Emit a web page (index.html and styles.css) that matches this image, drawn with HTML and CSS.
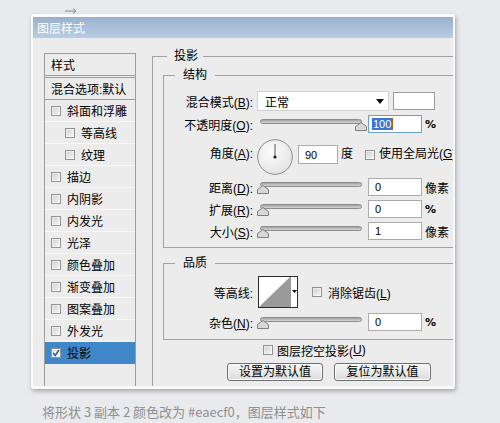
FILE: index.html
```html
<!DOCTYPE html>
<html lang="zh">
<head>
<meta charset="utf-8">
<title>图层样式</title>
<link rel="stylesheet" href="styles.css">
</head>
<body>
<div class="arrow-row">
  <svg width="12" height="6" viewBox="0 0 12 6"><path d="M0 3H11M8 0.5L11 3L8 5.5" stroke="#8a8a8a" fill="none"/></svg>
</div>
<div class="window">
  <div class="titlebar">图层样式</div>
  <div class="body">
    <ul class="list">
      <li class="hdr">样式</li>
      <li class="blend">混合选项:默认</li>
      <li><span class="cb"></span>斜面和浮雕</li>
      <li class="sub"><span class="cb"></span>等高线</li>
      <li class="sub"><span class="cb"></span>纹理</li>
      <li><span class="cb"></span>描边</li>
      <li><span class="cb"></span>内阴影</li>
      <li><span class="cb"></span>内发光</li>
      <li><span class="cb"></span>光泽</li>
      <li><span class="cb"></span>颜色叠加</li>
      <li><span class="cb"></span>渐变叠加</li>
      <li><span class="cb"></span>图案叠加</li>
      <li><span class="cb"></span>外发光</li>
      <li class="sel"><span class="cb checked"><svg width="8" height="8" viewBox="0 0 8 8"><path d="M1 4L3.2 6.5L7 1" stroke="#2d5fa8" stroke-width="1.6" fill="none"/></svg></span>投影</li>
    </ul>
    <fieldset class="grp outer">
      <legend>投影</legend>
      <fieldset class="grp inner">
        <legend>结构</legend>
        <div class="row r-blend">
          <span class="lbl">混合模式(<u>B</u>):</span>
          <div class="select"><span>正常</span><svg width="8" height="5" viewBox="0 0 8 5"><path d="M0 0H8L4 5Z" fill="#111"/></svg></div>
          <div class="swatch"></div>
        </div>
        <div class="row r-op">
          <span class="lbl">不透明度(<u>O</u>):</span>
          <div class="slider"><div class="track"></div><svg class="thumb right" width="12" height="9" viewBox="0 0 12 9"><path d="M0.5 8.5V4.5L6 0.5L11.5 4.5V8.5Z" fill="#d8d8d8" stroke="#7f7f7f"/></svg></div>
          <div class="inp focus"><span class="selected">100</span></div>
          <span class="unit pct">%</span>
        </div>
        <div class="row r-angle">
          <span class="lbl">角度(<u>A</u>):</span>
          <svg class="dial" width="36" height="36" viewBox="0 0 36 36"><defs><radialGradient id="dg" cx="40%" cy="35%" r="70%"><stop offset="0" stop-color="#fdfdfd"/><stop offset="1" stop-color="#e2e2e2"/></radialGradient></defs><circle cx="18" cy="18" r="17.3" fill="url(#dg)" stroke="#8c8c8c"/><line x1="18" y1="18" x2="18" y2="5" stroke="#555" stroke-width="1"/><circle cx="18" cy="18" r="1.6" fill="#222"/></svg>
          <div class="inp inp-angle">90</div>
          <span class="deg">度</span>
          <span class="cb cb-global"></span>
          <span class="global">使用全局光(<u>G</u>)</span>
        </div>
        <div class="row r-dist">
          <span class="lbl">距离(<u>D</u>):</span>
          <div class="slider"><div class="track"></div><svg class="thumb" width="12" height="9" viewBox="0 0 12 9"><path d="M0.5 8.5V4.5L6 0.5L11.5 4.5V8.5Z" fill="#d8d8d8" stroke="#7f7f7f"/></svg></div>
          <div class="inp">0</div>
          <span class="unit">像素</span>
        </div>
        <div class="row r-dist">
          <span class="lbl">扩展(<u>R</u>):</span>
          <div class="slider"><div class="track"></div><svg class="thumb" width="12" height="9" viewBox="0 0 12 9"><path d="M0.5 8.5V4.5L6 0.5L11.5 4.5V8.5Z" fill="#d8d8d8" stroke="#7f7f7f"/></svg></div>
          <div class="inp">0</div>
          <span class="unit pct">%</span>
        </div>
        <div class="row r-size">
          <span class="lbl">大小(<u>S</u>):</span>
          <div class="slider"><div class="track"></div><svg class="thumb" width="12" height="9" viewBox="0 0 12 9"><path d="M0.5 8.5V4.5L6 0.5L11.5 4.5V8.5Z" fill="#d8d8d8" stroke="#7f7f7f"/></svg></div>
          <div class="inp">1</div>
          <span class="unit">像素</span>
        </div>
      </fieldset>
      <fieldset class="grp inner quality">
        <legend>品质</legend>
        <div class="row r-contour">
          <span class="lbl">等高线:</span>
          <svg class="contour" width="40" height="32" viewBox="0 0 40 32"><rect x="0.5" y="0.5" width="39" height="31" fill="#fff" stroke="#2b2b2b"/><path d="M1 31L32 1V31Z" fill="#9a9a9a"/><line x1="32.5" y1="1" x2="32.5" y2="31" stroke="#9a9a9a"/><path d="M34 14H39L36.5 17Z" fill="#111"/></svg>
          <span class="cb cb-aa"></span>
          <span>消除锯齿(<u>L</u>)</span>
        </div>
        <div class="row r-size">
          <span class="lbl">杂色(<u>N</u>):</span>
          <div class="slider"><div class="track"></div><svg class="thumb" width="12" height="9" viewBox="0 0 12 9"><path d="M0.5 8.5V4.5L6 0.5L11.5 4.5V8.5Z" fill="#d8d8d8" stroke="#7f7f7f"/></svg></div>
          <div class="inp">0</div>
          <span class="unit pct">%</span>
        </div>
      </fieldset>
      <div class="knock"><span class="cb"></span>图层挖空投影(<u>U</u>)</div>
      <div class="btns">
        <div class="btn">设置为默认值</div>
        <div class="btn wide">复位为默认值</div>
      </div>
    </fieldset>
  </div>
</div>
<p class="caption">将形状 3 副本 2 颜色改为 #eaecf0，图层样式如下</p>
</body>
</html>
```

FILE: styles.css
```css
* { box-sizing: border-box; }
html, body { margin: 0; padding: 0; }
body {
  background: #e9eaee;
  font-family: "Liberation Sans", "Noto Sans CJK SC", sans-serif;
  font-size: 12px;
  color: #000;
  width: 500px;
  height: 423px;
  overflow: hidden;
}
u { text-decoration: underline; text-underline-offset: 1px; }

.arrow-row { height: 14px; display: flex; }
.arrow-row svg { margin: 8px 0 0 65px; }

.window {
  margin-left: 31px;
  width: 424px;
  height: 375px;
  background: #ececec;
  border: solid #fafafa;
  border-width: 3px 2px 3px 2px;
  border-radius: 2px;
  box-shadow: 1px 2px 4px rgba(0, 0, 0, 0.3);
  overflow: hidden;
}
.titlebar {
  height: 21px;
  line-height: 21px;
  padding-left: 4px;
  color: #fff;
  background: linear-gradient(#9ab0cb, #b9cde6);
  font-family: "Noto Sans CJK SC", sans-serif;
  font-size: 12px;
}
.body {
  display: flex;
  align-items: flex-start;
  gap: 16px;
  padding: 10px 0 0 11px;
}

/* left style list */
.list {
  flex: none;
  width: 92px;
  height: 400px;
  margin: 5px 0 0;
  padding: 0;
  list-style: none;
  border: 1px solid #9d9d9d;
}
.list li {
  height: 22px;
  display: flex;
  align-items: center;
  padding-left: 6px;
  border-bottom: 1px solid #f8f8f8;
  white-space: nowrap;
}
.list .hdr { border-bottom-color: #9d9d9d; margin-bottom: 1px; }
.list .blend { height: 23px; border-top: 1px solid #9d9d9d; border-bottom-color: #9d9d9d; }
.list .sub { padding-left: 20px; }
.list .sel { background: #3f87c9; border-bottom-color: #3f87c9; }

.cb {
  flex: none;
  width: 10px;
  height: 10px;
  margin-right: 6px;
  border: 1px solid #939393;
  background: linear-gradient(135deg, #cfcfcf, #f7f7f7);
  box-shadow: inset 0 0 0 1px rgba(255, 255, 255, 0.5);
  display: flex;
  align-items: center;
  justify-content: center;
}
.cb.checked { background: linear-gradient(135deg, #dcdcdc, #ffffff); }

/* group boxes */
.grp {
  margin: 0;
  min-width: 0;
  border: 1px solid #a3a3a3;
}
.grp legend {
  padding: 0 5px 0 7px;
  margin-left: 4px;
  line-height: 17px;
  font-size: 12px;
}
.outer {
  flex: none;
  width: 320px;
  height: 400px;
  padding: 2px 0 0 10px;
}
.inner {
  width: 100%;
  padding: 7px 0 7px 0;
}
.inner legend { margin-left: 11px; padding: 0 8px; }
.quality { margin-top: 7px; padding: 4px 0 8px 0; }

.row { display: flex; align-items: center; white-space: nowrap; }
.lbl { flex: none; width: 89px; margin-right: 4px; text-align: right; }
.r-blend { height: 20px; margin-bottom: 4px; }
.r-op { height: 18px; margin-bottom: 6px; }
.r-angle { height: 36px; align-items: flex-start; margin-bottom: 3px; }
.r-dist { height: 18px; margin-bottom: 4px; }
.r-size { height: 18px; }
.r-contour { height: 32px; margin-bottom: 5px; }

.select {
  flex: none;
  width: 132px;
  height: 20px;
  padding: 0 4px 0 7px;
  background: #fff;
  border: 1px solid #d2d2d2;
  display: flex;
  align-items: center;
  justify-content: space-between;
}
.swatch {
  flex: none;
  width: 42px;
  height: 18px;
  margin-left: 4px;
  background: #fff;
  border: 1px solid #9c9c9c;
}

.slider { position: relative; flex: none; width: 110px; height: 14px; margin-right: 1px; }
.track {
  height: 5px;
  margin: 2px 5px 0 3px;
  border-radius: 3px;
  border: 1px solid #8d8d8d;
  background: linear-gradient(#a3a3a3, #d6d6d6);
}
.thumb { position: absolute; top: 5px; left: 0; }
.thumb.right { left: auto; right: 0; }

.inp {
  flex: none;
  width: 54px;
  height: 18px;
  padding-left: 6px;
  background: #fff;
  border: 1px solid #ababab;
  font-family: "Liberation Sans", sans-serif;
  font-size: 11px;
  display: flex;
  align-items: center;
}
.inp.focus { border-color: #6d9fd6; padding-left: 3px; }
.selected {
  background: #3a78d4;
  color: #fff;
  line-height: 12px;
  padding: 0 1px;
  border-right: 1px solid #c2580a;
}
.unit { margin-left: 3px; }
.pct { font-family: "DejaVu Sans", sans-serif; font-size: 11px; font-weight: bold; }

.dial { flex: none; }
.r-angle .lbl { margin-top: 6px; line-height: 19px; }
.inp-angle { width: 40px; height: 19px; margin: 6px 0 0 5px; }
.deg { margin: 6px 0 0 3px; line-height: 19px; }
.cb-global { margin: 11px 4px 0 12px; }
.global { margin-top: 6px; line-height: 19px; }

.contour { flex: none; margin-left: 1px; }
.cb-aa { margin: 0 6px 0 14px; }

.knock {
  display: flex;
  align-items: center;
  height: 14px;
  margin: 3px 0 0 100px;
}
.knock .cb { margin-right: 4px; }
.btns { display: flex; gap: 11px; margin: 6px 0 0 64px; }
.btn {
  width: 96px;
  height: 18px;
  line-height: 16px;
  text-align: center;
  border: 1px solid #6f6f6f;
  border-radius: 3px;
  background: linear-gradient(#f6f6f6, #dcdcdc);
  box-shadow: inset 0 0 0 1px #fbfbfb;
}
.btn.wide { width: 97px; }

.caption {
  margin: 15px 0 0 42px;
  font-family: "Noto Sans CJK SC", sans-serif;
  font-size: 13px;
  line-height: 16px;
  color: #8f8f8f;
}
```
